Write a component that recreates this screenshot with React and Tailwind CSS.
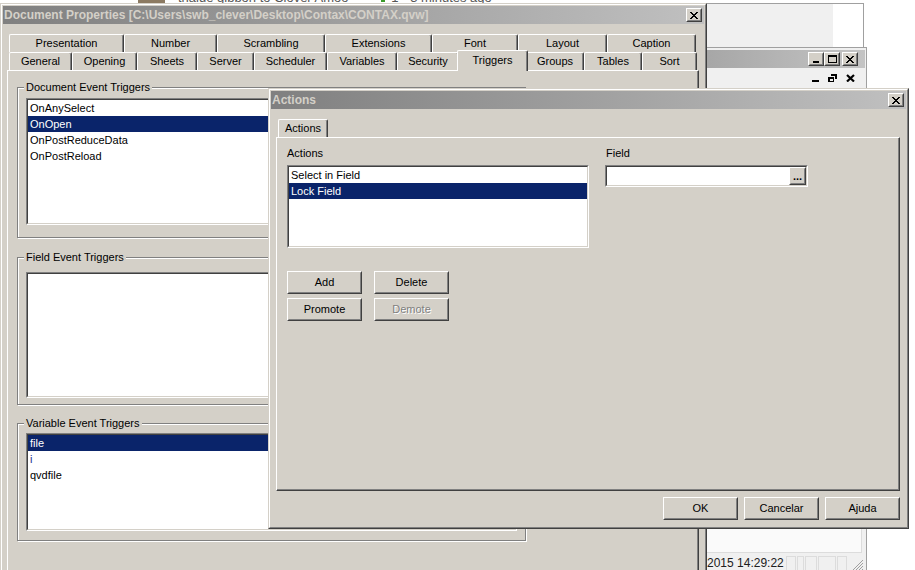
import React from "react";

// win2k style bevels
const raisedOut = "border border-t-white border-l-white border-r-[#404040] border-b-[#404040]";
const raisedIn = "border border-t-[#d4d0c8] border-l-[#d4d0c8] border-r-[#808080] border-b-[#808080]";
const frameOut = "border border-t-[#d4d0c8] border-l-[#d4d0c8] border-r-[#404040] border-b-[#404040]";
const frameIn = "border border-t-white border-l-white border-r-[#808080] border-b-[#808080]";
const sunkOut = "border border-t-[#808080] border-l-[#808080] border-r-white border-b-white";
const sunkIn = "border border-t-[#404040] border-l-[#404040] border-r-[#d4d0c8] border-b-[#d4d0c8]";
const panel =
    "border border-t-white border-l-white border-r-[#404040] border-b-[#404040] shadow-[inset_-1px_-1px_0_#808080]";

const xRows = [[0, 1, 6, 7], [1, 2, 5, 6], [2, 3, 4, 5], [3, 4], [2, 3, 4, 5], [1, 2, 5, 6], [0, 1, 6, 7]];

function XGlyph() {
    return (
        <svg width="8" height="7" viewBox="0 0 8 7" shapeRendering="crispEdges">
            {xRows.map((row, y) => row.map((x) => <rect key={`${x}-${y}`} x={x} y={y} width="1" height="1" fill="#000" />))}
        </svg>
    );
}

function CaptionBtn({ children, className = "" }) {
    return (
        <div className={`w-[16px] h-[14px] bg-[#d4d0c8] ${raisedOut} ${className}`}>
            <div className={`h-full flex items-center justify-center ${raisedIn}`}>{children}</div>
        </div>
    );
}

function TitleBar({ title }) {
    return (
        <div className="h-[18px] shrink-0 flex items-center justify-between pl-[1px] pr-[2px] bg-linear-to-r from-[#808080] to-[#c0c0c0]">
            <span className="font-bold text-[12px] text-[#d4d0c8] leading-none whitespace-nowrap">{title}</span>
            <CaptionBtn>
                <XGlyph />
            </CaptionBtn>
        </div>
    );
}

function Tab({ label, w, active }) {
    return (
        <div
            className={`${w} ${
                active ? "-mx-[2px] -mb-px h-[21px] relative z-10 bg-[#d4d0c8] pb-[2px]" : "h-[18px] pb-px"
            } shrink-0 border-t border-l border-r border-t-white border-l-white border-r-[#404040] rounded-tl-[2px] rounded-tr-[2px] shadow-[inset_-1px_0_0_#808080] flex items-center justify-center leading-none whitespace-nowrap`}
        >
            {label}
        </div>
    );
}

function ListBox({ items = [], selected, className = "", blueItem }) {
    return (
        <div className={`${sunkOut} ${className}`}>
            <div className={`${sunkIn} h-full bg-white overflow-hidden`}>
                {items.map((it) => (
                    <div
                        key={it}
                        className={`h-[16px] leading-[16px] pl-[2px] whitespace-nowrap ${
                            it === selected ? "bg-[#0a246a] text-white" : it === blueItem ? "text-[#1c2f8f]" : "text-black"
                        }`}
                    >
                        {it}
                    </div>
                ))}
            </div>
        </div>
    );
}

function Group({ title, className = "", children }) {
    return (
        <div className={`relative w-[509px] border border-[#808080] shadow-[inset_1px_1px_0_#fff,1px_1px_0_#fff] ${className}`}>
            <span className="absolute -top-[7px] left-[6px] px-[2px] bg-[#d4d0c8] leading-[13px] whitespace-nowrap">{title}</span>
            {children}
        </div>
    );
}

function Btn({ children, disabled }) {
    return (
        <div className={`w-[75px] h-[23px] shrink-0 ${raisedOut}`}>
            <div
                className={`h-full flex items-center justify-center ${raisedIn} ${
                    disabled ? "text-[#808080] [text-shadow:1px_1px_0_#fff]" : "text-black"
                }`}
            >
                {children}
            </div>
        </div>
    );
}

const row1 = [
    { label: "Presentation", w: "w-[115px]" },
    { label: "Number", w: "w-[93px]" },
    { label: "Scrambling", w: "w-[108px]" },
    { label: "Extensions", w: "w-[107px]" },
    { label: "Font", w: "w-[86px]" },
    { label: "Layout", w: "w-[89px]" },
    { label: "Caption", w: "w-[89px]" },
];

const row2 = [
    { label: "General", w: "w-[63px]" },
    { label: "Opening", w: "w-[65px]" },
    { label: "Sheets", w: "w-[60px]" },
    { label: "Server", w: "w-[57px]" },
    { label: "Scheduler", w: "w-[73px]" },
    { label: "Variables", w: "w-[70px]" },
    { label: "Security", w: "w-[62px]" },
    { label: "Triggers", w: "w-[71px]", active: true },
    { label: "Groups", w: "w-[58px]" },
    { label: "Tables", w: "w-[58px]" },
    { label: "Sort", w: "w-[55px]" },
];

function BackgroundWindow() {
    return (
        <div className="absolute left-[690px] top-[47px] w-[177px] h-[540px] border border-[#a0a0a0] bg-[#f0f0f0] flex flex-col">
            <div className="mx-[1px] mt-[2px] h-[18px] shrink-0 bg-linear-to-r from-[#a4a4a4] to-[#c4c4c4] flex items-center justify-end pr-[7px]">
                <CaptionBtn className="w-[15px]">
                    <svg width="6" height="7" viewBox="0 0 6 7" shapeRendering="crispEdges">
                        <rect x="0" y="5" width="6" height="2" fill="#000" />
                    </svg>
                </CaptionBtn>
                <CaptionBtn className="w-[15px]">
                    <svg width="9" height="8" viewBox="0 0 9 8" shapeRendering="crispEdges">
                        <rect x="0.5" y="1" width="8" height="6.5" fill="none" stroke="#000" />
                        <rect x="0" y="0" width="9" height="2" fill="#000" />
                    </svg>
                </CaptionBtn>
                <CaptionBtn className="w-[15px] ml-[2px]">
                    <XGlyph />
                </CaptionBtn>
            </div>
            <div className="h-[20px] shrink-0 flex items-center justify-end gap-[9px] pr-[11px]">
                <svg width="7" height="8" viewBox="0 0 7 8" shapeRendering="crispEdges">
                    <rect x="0" y="6" width="7" height="2" fill="#000" />
                </svg>
                <svg width="9" height="8" viewBox="0 0 9 8" shapeRendering="crispEdges">
                    <path d="M3 0h6v5H7V2H3z" fill="#000" />
                    <path d="M0 3h6v5H0zM1.5 5h3v2h-3z" fill="#000" fillRule="evenodd" />
                </svg>
                <svg width="9" height="8" viewBox="0 0 9 8">
                    <path d="M1 1L8 7.5M8 1L1 7.5" stroke="#000" strokeWidth="2.2" />
                </svg>
            </div>
            <div className="h-[441px] shrink-0" />
            <div className="h-[24px] shrink-0 mr-[4px] bg-[#fafafa] border-r border-b border-[#dcdcdc]" />
            <div className="h-[20px] shrink-0 flex items-center pl-[16px] text-[12px] text-[#202020]">
                <span className="whitespace-nowrap">2015 14:29:22</span>
                <div className="ml-[2px] flex h-[15px] gap-[1px]">
                    <div className="w-[10px] border border-[#dcdcdc]" />
                    <div className="w-[7px] border border-[#dcdcdc]" />
                    <div className="w-[12px] border border-[#dcdcdc]" />
                    <div className="w-[18px] border border-[#dcdcdc]" />
                    <div className="w-[10px] border border-[#dcdcdc]" />
                </div>
                <svg className="ml-[5px] mt-[4px]" width="12" height="12" viewBox="0 0 12 12">
                    <path d="M11 1L1 11M11 4L4 11M11 7L7 11M11 10L10 11" stroke="#a0a0a0" strokeWidth="1" />
                </svg>
            </div>
        </div>
    );
}

export default function App() {
    return (
        <div className="relative w-[915px] h-[570px] overflow-hidden bg-white font-['Liberation_Sans',Arial,sans-serif] text-[11px] text-black">
            {/* web page peeking above everything */}
            <div className="absolute left-0 top-0 w-full h-[4px] overflow-hidden">
                <div className="-mt-[9px] h-[13px] flex items-center text-[13px] text-[#555] whitespace-nowrap">
                    <div className="ml-[138px] w-[27px] h-[13px] bg-[#8c7a62]" />
                    <span className="ml-[13px]">thalde gibbon to Clover Amoo</span>
                    <span className="ml-[6px] text-[#bbb]">===</span>
                    <div className="ml-[4px] w-[4px] h-[8px] bg-[#3a9a2a]" />
                    <span className="ml-[6px]">1 - 3 minutes ago</span>
                </div>
            </div>

            <div className="absolute left-[600px] top-[3px] w-[264px] h-[45px] border-t border-r border-[#a0a0a0] bg-white flex">
                <div className="w-[233px] bg-[#f0f0f0]" />
            </div>

            <BackgroundWindow />

            {/* Document Properties */}
            <div className={`absolute z-10 left-0 top-[3px] w-[707px] h-[600px] bg-[#d4d0c8] ${frameOut}`}>
                <div className={`h-full p-px flex flex-col ${frameIn}`}>
                    <TitleBar title="Document Properties [C:\Users\swb_clever\Desktop\Contax\CONTAX.qvw]" />
                    <div className="mt-[10px] ml-[4px] w-[692px] flex-1 flex flex-col">
                        <div className="pl-[2px] h-[18px] flex">
                            {row1.map((t) => (
                                <Tab key={t.label} {...t} />
                            ))}
                        </div>
                        <div className="pl-[2px] h-[18px] flex items-end">
                            {row2.map((t) => (
                                <Tab key={t.label} {...t} />
                            ))}
                        </div>
                        <div className={`flex-1 pl-[9px] ${panel}`}>
                            <Group title="Document Event Triggers" className="mt-[16px] pt-[10px] pb-[12px] px-[8px]">
                                <ListBox
                                    className="h-[127px]"
                                    items={["OnAnySelect", "OnOpen", "OnPostReduceData", "OnPostReload"]}
                                    selected="OnOpen"
                                />
                            </Group>
                            <Group title="Field Event Triggers" className="mt-[19px] pt-[14px] pb-[6px] px-[8px]">
                                <ListBox className="h-[126px]" />
                            </Group>
                            <Group title="Variable Event Triggers" className="mt-[18px] pt-[9px] pb-[9px] px-[8px]">
                                <ListBox className="h-[98px]" items={["file", "i", "qvdfile"]} selected="file" blueItem="i" />
                            </Group>
                        </div>
                    </div>
                </div>
            </div>

            {/* Actions dialog */}
            <div className={`absolute z-20 left-[268px] top-[88px] w-[641px] h-[441px] bg-[#d4d0c8] ${frameOut}`}>
                <div className={`h-full p-px flex flex-col ${frameIn}`}>
                    <TitleBar title="Actions" />
                    <div className="mt-[8px] ml-[5px] w-[624px] flex flex-col">
                        <div className="pl-[2px] h-[20px] flex items-end">
                            <Tab label="Actions" w="w-[50px]" />
                        </div>
                        <div className={`h-[354px] pt-[9px] pl-[10px] flex gap-[16px] ${panel}`}>
                            <div className="w-[302px] flex flex-col">
                                <div className="leading-[13px]">Actions</div>
                                <ListBox className="mt-[5px] h-[83px]" items={["Select in Field", "Lock Field"]} selected="Lock Field" />
                                <div className="mt-[23px] flex gap-[12px]">
                                    <Btn>Add</Btn>
                                    <Btn>Delete</Btn>
                                </div>
                                <div className="mt-[4px] flex gap-[12px]">
                                    <Btn>Promote</Btn>
                                    <Btn disabled>Demote</Btn>
                                </div>
                            </div>
                            <div className="w-[203px] flex flex-col">
                                <div className="pl-px leading-[13px]">Field</div>
                                <div className={`mt-[5px] h-[22px] ${sunkOut}`}>
                                    <div className={`h-full bg-white flex justify-end ${sunkIn}`}>
                                        <div className={`w-[17px] h-full bg-[#d4d0c8] ${raisedOut}`}>
                                            <div className={`h-full flex items-end justify-center pb-[1px] font-bold leading-none ${raisedIn}`}>...</div>
                                        </div>
                                    </div>
                                </div>
                            </div>
                        </div>
                        <div className="mt-[6px] flex justify-end gap-[6px]">
                            <Btn>OK</Btn>
                            <Btn>Cancelar</Btn>
                            <Btn>Ajuda</Btn>
                        </div>
                    </div>
                </div>
            </div>
        </div>
    );
}
